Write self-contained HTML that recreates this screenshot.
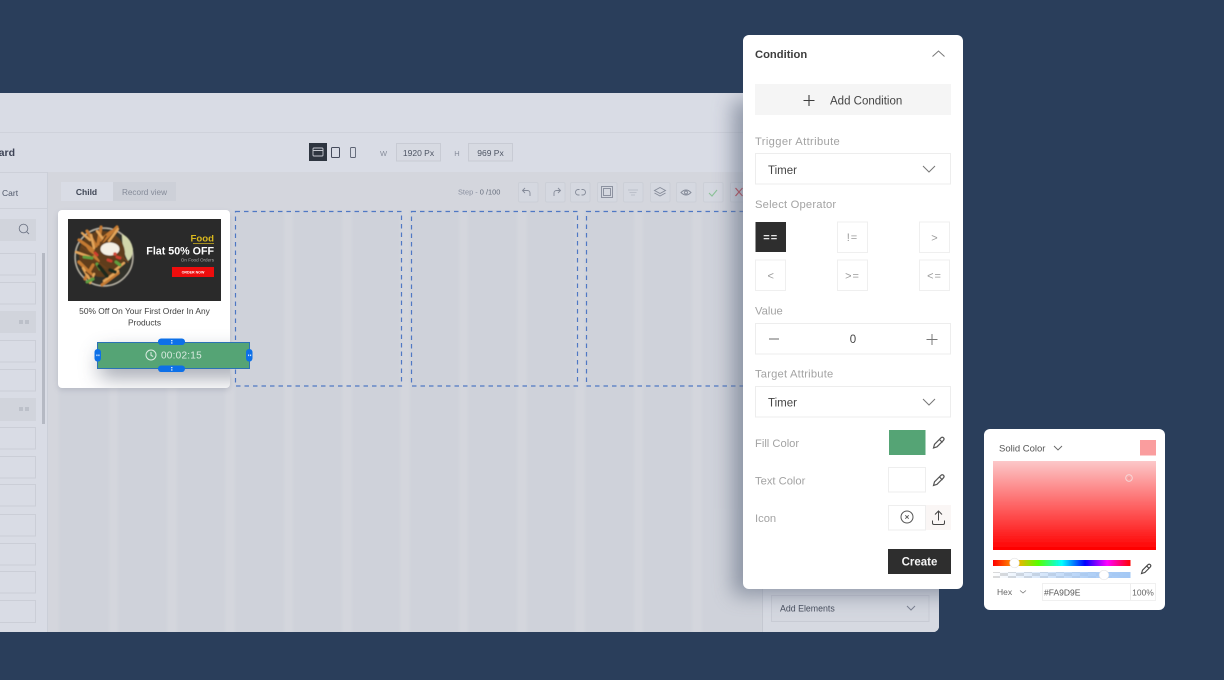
<!DOCTYPE html>
<html><head><meta charset="utf-8"><title>Condition</title>
<style>
html,body{margin:0;padding:0;width:1224px;height:680px;overflow:hidden;background:#2a3e5b}
svg{display:block;font-family:"Liberation Sans",sans-serif}
</style></head><body>
<svg width="1224" height="680" viewBox="0 0 1224 680" xmlns="http://www.w3.org/2000/svg">
<defs>
<filter id="b1" x="-30%" y="-30%" width="160%" height="160%"><feGaussianBlur stdDeviation="10"/></filter>
<filter id="b2" x="-40%" y="-150%" width="180%" height="400%"><feGaussianBlur stdDeviation="10"/></filter>
<filter id="b3" x="-30%" y="-30%" width="160%" height="160%"><feGaussianBlur stdDeviation="3"/></filter>
<filter id="b4" x="-5%" y="-5%" width="110%" height="110%"><feGaussianBlur stdDeviation="1.5"/></filter>
<filter id="b5" x="-10%" y="-10%" width="120%" height="120%"><feGaussianBlur stdDeviation="0.4"/></filter>
<filter id="s"><feGaussianBlur stdDeviation="0.3"/></filter>
<clipPath id="main"><path d="M0 93H939V626a6 6 0 0 1-6 6H0Z"/></clipPath>
<clipPath id="c1"><rect x="58" y="210" width="172" height="178" rx="4"/></clipPath>
<clipPath id="canvas"><rect x="48" y="210" width="714" height="422"/></clipPath>
<linearGradient id="hue"><stop offset="0" stop-color="#f00"/><stop offset=".17" stop-color="#fa0"/><stop offset=".33" stop-color="#5f0"/><stop offset=".5" stop-color="#0ff"/><stop offset=".67" stop-color="#00f"/><stop offset=".83" stop-color="#f0f"/><stop offset="1" stop-color="#f00"/></linearGradient>
<linearGradient id="red" x1="0" y1="0" x2="0" y2="1"><stop offset="0" stop-color="#fcc8c9"/><stop offset="1" stop-color="#ff0000"/></linearGradient>
<linearGradient id="alpha"><stop offset="0" stop-color="#a3c8f5" stop-opacity="0"/><stop offset=".7" stop-color="#a3c8f5" stop-opacity=".85"/><stop offset="1" stop-color="#a3c8f5"/></linearGradient>
<pattern id="chk" width="16" height="6" patternUnits="userSpaceOnUse"><rect width="16" height="6" fill="#fff"/><rect x="0" y="0" width="8" height="3" fill="#dadada"/><rect x="8" y="3" width="8" height="3" fill="#dadada"/></pattern>
</defs>

<g filter="url(#s)">
<!-- Main window -->
<g clip-path="url(#main)">
<rect x="0" y="93" width="939" height="539" fill="#d9dce5"/>
<rect x="0" y="132" width="939" height="1" fill="#cfd2db"/>
<rect x="0" y="172" width="939" height="460" fill="#d5d8e1"/>
<!-- canvas stripes -->
<rect x="48" y="172" width="714" height="460" fill="#d4d6dd"/>
<g clip-path="url(#canvas)"><g fill="#cfd2da" filter="url(#b4)">
<rect x="59" y="200" width="50" height="440"/><rect x="118" y="200" width="49" height="440"/><rect x="177" y="200" width="48" height="440"/><rect x="235" y="200" width="49" height="440"/><rect x="293" y="200" width="49" height="440"/><rect x="352" y="200" width="48" height="440"/><rect x="410" y="200" width="49" height="440"/><rect x="468" y="200" width="49" height="440"/><rect x="527" y="200" width="48" height="440"/><rect x="585" y="200" width="49" height="440"/><rect x="643" y="200" width="49" height="440"/><rect x="702" y="200" width="60" height="440"/>
</g></g>
<!-- Left sidebar -->
<rect x="0" y="172" width="47" height="460" fill="#d9dce5"/>
<rect x="47" y="172" width="1" height="460" fill="#cbcfd8"/>
<rect x="0" y="172" width="47" height="1" fill="#cdd0d9"/>
<rect x="0" y="208" width="47" height="1" fill="#cdd0d9"/>
<text x="2" y="196" font-size="8.500" fill="#50586a">Cart</text>
<text x="15" y="156" font-size="10.500" font-weight="700" fill="#3c4354" text-anchor="end">Dashboard</text>
<rect x="-2" y="219" width="38" height="22" fill="#d1d4dc"/>
<circle cx="23.500" cy="228.500" r="4.300" fill="none" stroke="#6f7686" stroke-width=".9"/><path d="M26.600 231.700L29 234" stroke="#6f7686" stroke-width=".9"/>
<g fill="none" stroke="#cbced7">
<rect x="-2" y="253.500" width="37.500" height="21.500"/><rect x="-2" y="282.500" width="37.500" height="21.500"/><rect x="-2" y="340.500" width="37.500" height="21.500"/><rect x="-2" y="369.500" width="37.500" height="21.500"/><rect x="-2" y="427.500" width="37.500" height="21.500"/><rect x="-2" y="456.500" width="37.500" height="21.500"/><rect x="-2" y="484.500" width="37.500" height="21.500"/><rect x="-2" y="514.500" width="37.500" height="21.500"/><rect x="-2" y="543.500" width="37.500" height="21.500"/><rect x="-2" y="571.500" width="37.500" height="21.500"/><rect x="-2" y="600.500" width="37.500" height="22"/>
</g>
<rect x="-2" y="311" width="38" height="22" fill="#d1d4dc"/><rect x="-2" y="398" width="38" height="23" fill="#d1d4dc"/>
<g fill="#bcc0c9"><rect x="19" y="320" width="4" height="4"/><rect x="25" y="320" width="4" height="4"/><rect x="19" y="407" width="4" height="4"/><rect x="25" y="407" width="4" height="4"/></g>
<rect x="42" y="253" width="3" height="171" fill="#b5b9c3"/>

<!-- Header device controls -->
<rect x="309" y="143" width="18" height="18" fill="#2f3541"/>
<rect x="313" y="148" width="10" height="8" rx="1" fill="none" stroke="#c5c8d0" stroke-width=".9"/><path d="M313 150.500H323" stroke="#c5c8d0" stroke-width=".9"/>
<rect x="331.500" y="147.500" width="8" height="10" rx="1" fill="none" stroke="#454c5b" stroke-width="1"/>
<rect x="350.500" y="147.500" width="5" height="10" rx="1" fill="none" stroke="#5d6473" stroke-width=".9"/>
<text x="383.500" y="156" font-size="7.500" fill="#868c9a" text-anchor="middle">W</text>
<rect x="396.500" y="143.500" width="44" height="17.500" fill="#d7dae2" stroke="#c8cbd4"/>
<text x="418.500" y="156" font-size="8.500" fill="#4d5463" text-anchor="middle">1920 Px</text>
<text x="457" y="156" font-size="7.500" fill="#868c9a" text-anchor="middle">H</text>
<rect x="468.500" y="143.500" width="44" height="17.500" fill="#d7dae2" stroke="#c8cbd4"/>
<text x="490.500" y="156" font-size="8.500" fill="#4d5463" text-anchor="middle">969 Px</text>

<!-- Tabs -->
<rect x="113" y="182" width="63" height="19" fill="#cdd0d8"/>
<rect x="61" y="182" width="52" height="19" fill="#d9dce5"/>
<text x="86.500" y="195" font-size="8.500" font-weight="700" fill="#3f4656" text-anchor="middle">Child</text>
<text x="144.500" y="195" font-size="8.200" fill="#858b99" text-anchor="middle">Record view</text>

<!-- Toolbar -->
<text x="458" y="194.500" font-size="7.400" fill="#8a90a0">Step - <tspan fill="#666d7c">0 /100</tspan></text>
<g fill="#d5d8e0" stroke="#cccfd7"><rect x="518.500" y="182.500" width="19.500" height="19.500" rx="1.500"/><rect x="545.500" y="182.500" width="19.500" height="19.500" rx="1.500"/><rect x="570.500" y="182.500" width="19.500" height="19.500" rx="1.500"/><rect x="597.500" y="182.500" width="19.500" height="19.500" rx="1.500"/><rect x="623.500" y="182.500" width="19.500" height="19.500" rx="1.500"/><rect x="650.500" y="182.500" width="19.500" height="19.500" rx="1.500"/><rect x="676.500" y="182.500" width="19.500" height="19.500" rx="1.500"/><rect x="703.500" y="182.500" width="19.500" height="19.500" rx="1.500"/><rect x="730.500" y="182.500" width="19.500" height="19.500" rx="1.500"/></g>
<g fill="none" stroke="#858b99" stroke-width=".9">
<path d="M525 188l-2.500 2.500 2.500 2.500M522.500 190.500h5a2.500 2.500 0 0 1 2.500 2.500v3"/>
<path d="M558 188l2.500 2.500-2.500 2.500M560.500 190.500h-4a2.500 2.500 0 0 0-2.500 2.500v3"/>
<rect x="575.500" y="189.500" width="10" height="5.500" rx="2.700"/><path d="M580.500 187.500v9.500" stroke="#d5d8e0" stroke-width="2"/>
<rect x="601.500" y="186.500" width="11" height="11"/><rect x="603.500" y="188.500" width="7" height="7"/>
<path d="M628 190h10M629.500 192.500h7M631 195h4" stroke="#bcc0ca"/>
<path d="M660 187.500l5.500 3-5.500 3-5.500-3zM654.500 193l5.500 3 5.500-3"/>
<path d="M681 192.500q5-5 10 0q-5 5-10 0z"/><circle cx="686" cy="192.500" r="1.500"/>
</g>
<path d="M709 193l3 3 5-6" fill="none" stroke="#8cc298" stroke-width="1.100"/>
<path d="M735.500 188l7 8M742.500 188l-7 8" stroke="#c84a52" stroke-width="1.200"/>

<!-- Right sidebar -->
<rect x="762" y="560" width="177" height="72" fill="#d6d9e1"/>
<rect x="762" y="560" width="1" height="72" fill="#c5c8d1"/>
<rect x="771.500" y="595.500" width="157.500" height="26" fill="#d4d7df" stroke="#c8cbd4"/>
<text x="780" y="611.500" font-size="8.800" fill="#454c5b">Add Elements</text>
<path d="M907 606l4 4 4-4" fill="none" stroke="#7b8190"/>

<!-- Dashed frames -->
<g fill="none" stroke="#4f78c4" stroke-dasharray="4.500 4" stroke-width="1.200">
<rect x="235.500" y="211.500" width="166" height="174.500"/>
<rect x="411.500" y="211.500" width="166" height="174.500"/>
<rect x="586.500" y="211.500" width="170" height="174.500"/>
</g>

<!-- Card -->
<rect x="58" y="213" width="172" height="177" rx="4" fill="#6a7082" opacity=".25" filter="url(#b3)"/>
<rect x="58" y="210" width="172" height="178" rx="4" fill="#fff"/>
<g clip-path="url(#c1)"><rect x="100" y="352" width="150" height="26" fill="#4c5368" opacity=".5" filter="url(#b2)"/></g>

<!-- Food banner -->
<rect x="68" y="219" width="153" height="82" fill="#2a2a2a"/>
<g filter="url(#b5)">
<circle cx="104" cy="257" r="29" fill="#33302a" stroke="#b9b4a6" stroke-width="1.400"/>
<path d="M122 234q9 4 11 15q0 8-5 12q-6-10-6-27z" fill="#d2d6aa"/>
<circle cx="102" cy="254" r="23" fill="#5e3d1e"/>
<g fill="none" stroke-linecap="round">
<g stroke="#c47a32" stroke-width="3.200">
<path d="M79 240l14 10"/><path d="M87 231l9 15"/><path d="M101 227l-3 17"/><path d="M117 227l-14 14"/><path d="M111 232l-10 8"/><path d="M79 262l12 12"/><path d="M85 279l8-14"/><path d="M118 273l-16 12"/><path d="M88 247l10 14"/>
</g>
<g stroke="#e3a55a" stroke-width="2.400">
<path d="M76 252l14 5"/><path d="M91 235l3 13"/><path d="M118 229l-9 12"/><path d="M83 268l7 12"/><path d="M124 263l-10 8"/><path d="M104 281l14-10"/><path d="M90 283l4-9"/><path d="M82 233l8 7"/><path d="M97 231l6 8"/>
</g>
<g stroke="#6d421a" stroke-width="1.600"><path d="M82 247l11 8"/><path d="M106 236l-6 9"/><path d="M120 255l8 7"/><path d="M92 258l14 10"/><path d="M86 272l6 5"/></g>
<g stroke="#5f9e3f" stroke-width="3"><path d="M84 257l8 1"/><path d="M87 282l6-3"/><path d="M116 262l4 3"/><path d="M97 264l3 5"/></g>
<g stroke="#1f2a1c" stroke-width="3.600"><path d="M99 266l8 10"/><path d="M110 270l5 2"/></g>
<g stroke="#cf3d2e" stroke-width="2.800"><path d="M117 257l3 1"/><path d="M108 260l3 1"/><path d="M95 253l2 2"/></g>
</g>
<ellipse cx="110" cy="249" rx="9.500" ry="6.500" fill="#f4efe3"/>
<circle cx="115" cy="254" r="1.800" fill="#d04a34"/>
</g>
<text x="214" y="241.500" font-size="9.600" font-weight="700" fill="#d9b81f" text-anchor="end">Food</text>
<rect x="193" y="243" width="21" height=".7" fill="#d9b81f"/>
<text x="214" y="254.500" font-size="10.700" font-weight="700" fill="#fff" text-anchor="end">Flat 50% OFF</text>
<text x="214" y="261.500" font-size="4.600" fill="#a9a9a9" text-anchor="end">On Food Orders</text>
<rect x="172" y="267" width="42" height="10" fill="#ee0a0a"/>
<text x="193" y="273.500" font-size="3.600" font-weight="700" fill="#fff" text-anchor="middle">ORDER NOW</text>

<text x="144.500" y="314" font-size="8.400" fill="#3f3f3f" text-anchor="middle">50% Off On Your First Order In Any</text>
<text x="144.500" y="325.500" font-size="8.400" fill="#3f3f3f" text-anchor="middle">Products</text>

<!-- Timer -->
<rect x="97.500" y="342.500" width="152" height="26" fill="#55a474" stroke="#2b72b5"/>
<circle cx="151" cy="355" r="5" fill="none" stroke="#dcebe2" stroke-width="1"/><path d="M151 352v3.300l2.200 1.200" fill="none" stroke="#dcebe2" stroke-width="1"/>
<text x="161" y="358.700" font-size="10" fill="#d9eae0" letter-spacing=".25">00:02:15</text>
<g fill="#0b6fe8">
<rect x="158" y="338.500" width="27" height="6.500" rx="3.200"/><rect x="158" y="365.500" width="27" height="6.500" rx="3.200"/>
<rect x="94.500" y="349" width="6.500" height="12.500" rx="3.200"/><rect x="246" y="349" width="6.500" height="12.500" rx="3.200"/>
</g>
<g fill="#cfe3fb"><rect x="171" y="340" width="1.500" height="1.300"/><rect x="171" y="342.300" width="1.500" height="1.300"/><rect x="171" y="367" width="1.500" height="1.300"/><rect x="171" y="369.300" width="1.500" height="1.300"/><rect x="96.300" y="354.500" width="1.200" height="1.600"/><rect x="98.300" y="354.500" width="1.200" height="1.600"/><rect x="248" y="354.500" width="1.200" height="1.600"/><rect x="250" y="354.500" width="1.200" height="1.600"/></g>

<!-- Shadow of condition panel -->
<rect x="733" y="100" width="240" height="495" fill="#5f6a80" opacity=".6" filter="url(#b1)"/>
</g>

<!-- Condition panel -->
<rect x="743" y="35" width="220" height="554" rx="6" fill="#fff"/>
<text x="755" y="58" font-size="11.200" font-weight="700" fill="#3c3c3c">Condition</text>
<path d="M932.500 56.500l6-5.500 6 5.500" fill="none" stroke="#777" stroke-width="1"/>
<rect x="755" y="84" width="196" height="31" fill="#f5f5f5"/>
<path d="M809 95v11M803.500 100.500h11" stroke="#3c3c3c" stroke-width="1.100"/>
<text x="830" y="104.500" font-size="11.500" fill="#444">Add Condition</text>
<text x="755" y="145" font-size="11.200" fill="#a3a3a3" letter-spacing=".35">Trigger Attribute</text>
<rect x="755.500" y="153.500" width="195" height="30.500" fill="#fff" stroke="#ededed"/>
<text x="768" y="174" font-size="11.500" fill="#444">Timer</text>
<path d="M923 166l6 6 6-6" fill="none" stroke="#777" stroke-width="1"/>
<text x="755" y="208" font-size="11.200" fill="#a3a3a3" letter-spacing=".2">Select Operator</text>

<rect x="755.500" y="222" width="30.500" height="30" fill="#2e2e2e"/>
<g fill="#fff" stroke="#efefef"><rect x="837.500" y="222" width="30" height="30.500"/><rect x="919.500" y="222" width="30" height="30.500"/><rect x="755.500" y="260" width="30" height="30.500"/><rect x="837.500" y="260" width="30" height="30.500"/><rect x="919.500" y="260" width="30" height="30.500"/></g>
<g font-size="11" text-anchor="middle" fill="#9a9a9a">
<text x="770.700" y="241" fill="#e8e8e8" font-weight="700" letter-spacing="1">==</text>
<text x="852.500" y="241" letter-spacing="1">!=</text>
<text x="934.500" y="241.500">&gt;</text>
<text x="770.700" y="279.500">&lt;</text>
<text x="852.500" y="279.500" letter-spacing="1">&gt;=</text>
<text x="934.500" y="279.500" letter-spacing="1">&lt;=</text>
</g>
<text x="755" y="314.500" font-size="11.200" fill="#a3a3a3">Value</text>
<rect x="755.500" y="323.500" width="195" height="30.500" fill="#fff" stroke="#ededed"/>
<path d="M769 339h10" stroke="#777" stroke-width="1.100"/>
<text x="853" y="343" font-size="11.500" fill="#444" text-anchor="middle">0</text>
<path d="M932 334v11M926.500 339.500h11" stroke="#777" stroke-width="1"/>
<text x="755" y="377.500" font-size="11.200" fill="#a3a3a3" letter-spacing=".2">Target Attribute</text>
<rect x="755.500" y="386.500" width="195" height="30.500" fill="#fff" stroke="#ededed"/>
<text x="768" y="406.500" font-size="11.500" fill="#444">Timer</text>
<path d="M923 399l6 6 6-6" fill="none" stroke="#777" stroke-width="1"/>
<text x="755" y="447" font-size="11.200" fill="#a3a3a3">Fill Color</text>
<rect x="889" y="430" width="36.500" height="25" fill="#55a474"/>
<text x="755" y="484.500" font-size="11.200" fill="#a3a3a3">Text Color</text>
<rect x="888.500" y="467.500" width="37" height="24.500" fill="#fff" stroke="#eee"/>
<text x="755" y="522" font-size="11.200" fill="#a3a3a3">Icon</text>
<rect x="926" y="505" width="25" height="25" fill="#faf6f5"/>
<rect x="888.500" y="505.500" width="37" height="24.500" fill="#fff" stroke="#eee"/>
<circle cx="907" cy="517" r="6" fill="none" stroke="#555" stroke-width="1"/>
<path d="M905.300 515.300l3.400 3.400M908.700 515.300l-3.400 3.400" stroke="#555" stroke-width=".9"/>
<path d="M938.500 520.500v-9M935 514.500l3.500-3.500 3.500 3.500M932.500 520.500v2.500q0 1.500 1.500 1.500h9q1.500 0 1.500-1.500v-2.500" fill="none" stroke="#444" stroke-width="1"/>
<g fill="none" stroke="#555" stroke-width="1.200">
<path d="M933.500 448l1-3.700 6.500-6.500q1.300-1.100 2.500 0t0 2.500l-6.500 6.500zM939.500 439.500l3 3"/>
<path d="M933.500 485.500l1-3.700 6.500-6.500q1.300-1.100 2.500 0t0 2.500l-6.500 6.500zM939.500 477l3 3"/>
</g>
<rect x="888" y="549" width="63" height="25" fill="#2e2e2e"/>
<text x="919.500" y="565.500" font-size="11.500" font-weight="700" fill="#f5f5f5" text-anchor="middle">Create</text>

<!-- Color picker -->
<rect x="984" y="429" width="181" height="181" rx="6" fill="#fff"/>
<text x="999" y="451.500" font-size="9.500" fill="#555">Solid Color</text>
<path d="M1054 446l4 4 4-4" fill="none" stroke="#666" stroke-width=".9"/>
<rect x="1140" y="440" width="16" height="15.500" fill="#fa9d9e"/>
<rect x="993" y="461" width="163" height="89" fill="url(#red)"/>
<circle cx="1129" cy="478" r="3.300" fill="none" stroke="#f4dcdc" stroke-width=".9"/><circle cx="1129" cy="478" r="1" fill="#e89a9a"/>
<rect x="993" y="560" width="137.500" height="6" fill="url(#hue)"/>
<circle cx="1014.500" cy="563" r="4.800" fill="#fff" stroke="#e4e4e4" stroke-width=".6"/>
<rect x="993" y="572" width="137.500" height="6" fill="url(#chk)"/>
<rect x="993" y="572" width="137.500" height="6" fill="url(#alpha)"/>
<circle cx="1104" cy="575" r="4.800" fill="#fff" stroke="#e4e4e4" stroke-width=".6"/>
<path d="M1141.500 573.500l1-3.300 5.500-5.500q1.200-1 2.300 0t0 2.300l-5.500 5.500zM1146.500 565.800l2.800 2.800" fill="none" stroke="#444" stroke-width="1.100"/>
<text x="997" y="595" font-size="8.500" fill="#666">Hex</text>
<path d="M1020 590.500l3 2.500 3-2.500" fill="none" stroke="#777" stroke-width=".8"/>
<rect x="1042.500" y="583.500" width="113" height="17" fill="#fff" stroke="#f0f0f0"/>
<path d="M1130.500 584v16" stroke="#eee"/>
<text x="1044" y="595.500" font-size="8.500" fill="#555">#FA9D9E</text>
<text x="1143" y="595.500" font-size="8.500" fill="#666" text-anchor="middle">100%</text>
</g>
</svg>
</body></html>
